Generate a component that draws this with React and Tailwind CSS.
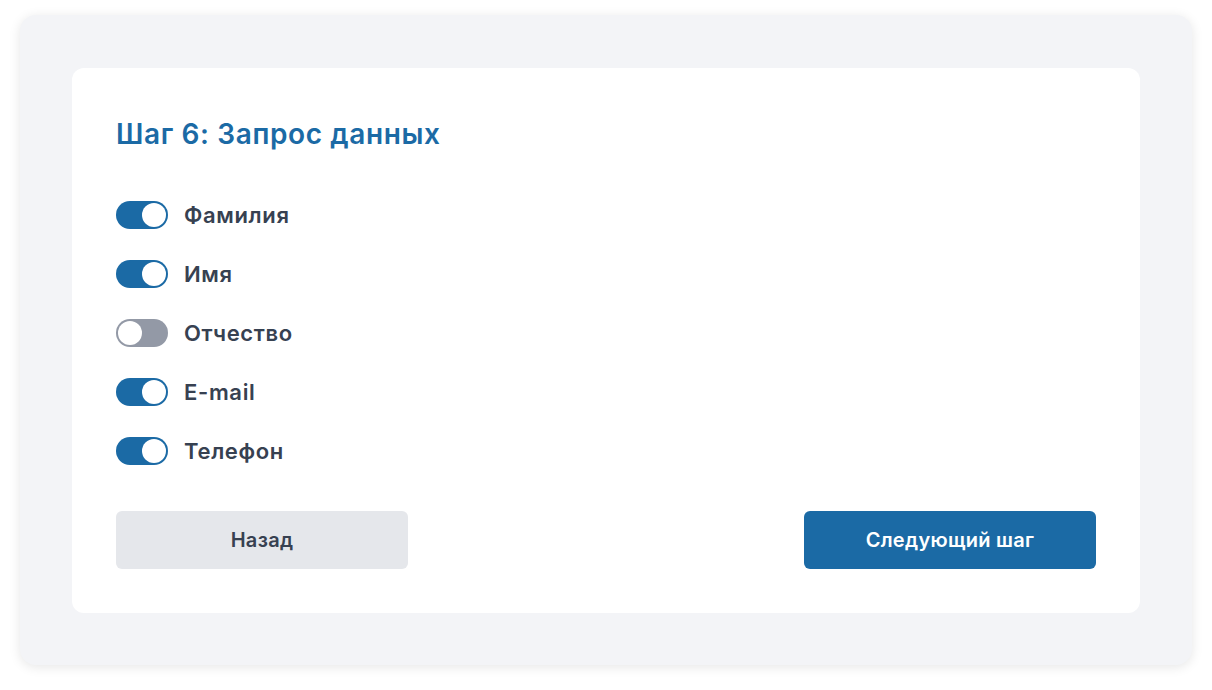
import { useState } from 'react';

const FIELDS = [
  { id: 'lastName', label: 'Фамилия', on: true },
  { id: 'firstName', label: 'Имя', on: true },
  { id: 'middleName', label: 'Отчество', on: false },
  { id: 'email', label: 'E-mail', on: true },
  { id: 'phone', label: 'Телефон', on: true },
];

// Переключатель поля формы
const Toggle = ({ checked, onChange }) => (
  <button
    type="button"
    onClick={onChange}
    className={`flex h-[28px] w-[52px] shrink-0 items-center rounded-full p-[2px] transition-colors ${
      checked ? 'justify-end bg-[#1b6aa5]' : 'justify-start bg-[#9399a6]'
    }`}
  >
    <span className="block h-[24px] w-[24px] rounded-full bg-white" />
  </button>
);

export default function App() {
  const [fields, setFields] = useState(FIELDS);

  const toggle = (id) =>
    setFields((prev) => prev.map((f) => (f.id === id ? { ...f, on: !f.on } : f)));

  return (
    <div className="min-h-screen w-full bg-white px-[20px] pt-[15px] font-['Inter',sans-serif]">
      {/* Подложка шага */}
      <div className="h-[650px] rounded-[16px] bg-[#f3f4f7] px-[52px] pt-[53px] shadow-[0_2px_12px_rgba(0,0,0,0.10)]">
        <div className="rounded-[12px] bg-white p-[44px]">
          <h2 className="pt-[2px] text-[28px] leading-[40px] font-semibold tracking-[0.022em] text-[#1b6aa5]">
            Шаг 6: Запрос данных
          </h2>

          <div className="mt-[47px] flex flex-col gap-[31px]">
            {fields.map((f) => (
              <label key={f.id} className="flex h-[28px] items-center gap-[16px]">
                <Toggle checked={f.on} onChange={() => toggle(f.id)} />
                <span className="text-[22px] font-semibold tracking-[0.03em] text-[#374151]">
                  {f.label}
                </span>
              </label>
            ))}
          </div>

          <div className="mt-[46px] flex items-center justify-between">
            <button
              type="button"
              className="h-[58px] w-[292px] rounded-[6px] bg-[#e5e7eb] text-[20px] font-semibold tracking-[0.015em] text-[#374151]"
            >
              Назад
            </button>
            <button
              type="button"
              className="h-[58px] w-[292px] rounded-[6px] bg-[#1b6aa5] text-[20px] font-semibold tracking-[0.015em] text-white"
            >
              Следующий шаг
            </button>
          </div>
        </div>
      </div>
    </div>
  );
}
